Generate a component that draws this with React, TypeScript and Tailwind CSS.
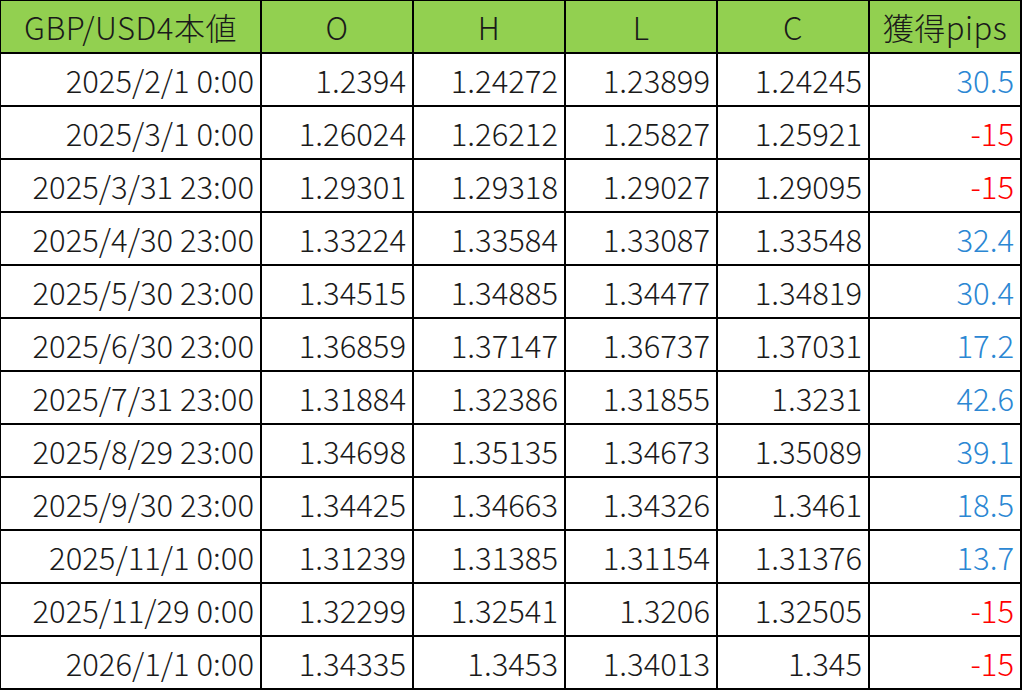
import React from 'react';

type Row = {
  date: string;
  o: string;
  h: string;
  l: string;
  c: string;
  pips: string;
};

const rows: Row[] = [
  { date: '2025/2/1 0:00', o: '1.2394', h: '1.24272', l: '1.23899', c: '1.24245', pips: '30.5' },
  { date: '2025/3/1 0:00', o: '1.26024', h: '1.26212', l: '1.25827', c: '1.25921', pips: '-15' },
  { date: '2025/3/31 23:00', o: '1.29301', h: '1.29318', l: '1.29027', c: '1.29095', pips: '-15' },
  { date: '2025/4/30 23:00', o: '1.33224', h: '1.33584', l: '1.33087', c: '1.33548', pips: '32.4' },
  { date: '2025/5/30 23:00', o: '1.34515', h: '1.34885', l: '1.34477', c: '1.34819', pips: '30.4' },
  { date: '2025/6/30 23:00', o: '1.36859', h: '1.37147', l: '1.36737', c: '1.37031', pips: '17.2' },
  { date: '2025/7/31 23:00', o: '1.31884', h: '1.32386', l: '1.31855', c: '1.3231', pips: '42.6' },
  { date: '2025/8/29 23:00', o: '1.34698', h: '1.35135', l: '1.34673', c: '1.35089', pips: '39.1' },
  { date: '2025/9/30 23:00', o: '1.34425', h: '1.34663', l: '1.34326', c: '1.3461', pips: '18.5' },
  { date: '2025/11/1 0:00', o: '1.31239', h: '1.31385', l: '1.31154', c: '1.31376', pips: '13.7' },
  { date: '2025/11/29 0:00', o: '1.32299', h: '1.32541', l: '1.3206', c: '1.32505', pips: '-15' },
  { date: '2026/1/1 0:00', o: '1.34335', h: '1.3453', l: '1.34013', c: '1.345', pips: '-15' },
];

const headers = ['GBP/USD4本値', 'O', 'H', 'L', 'C', '獲得pips'];

export default function App() {
  return (
    <div
      className="w-[1024px] h-[690px] bg-white text-[#1a1a1a] overflow-hidden"
      style={{ fontFamily: '"Noto Sans CJK JP", "Noto Sans", sans-serif' }}
    >
      <div className="grid grid-cols-[261px_152px_152px_152px_152px_152px] w-[1022px] border-t border-l border-black font-light">
        {headers.map((h) => (
          <div
            key={h}
            className="h-[53px] bg-[#92d050] border-r-2 border-b-2 border-black flex items-center justify-center text-[31px] tracking-[0.5px] leading-none"
          >
            {h}
          </div>
        ))}
        {rows.map((r) => (
          <React.Fragment key={r.date}>
            {[r.date, r.o, r.h, r.l, r.c].map((v, i) => (
              <div
                key={i}
                className="h-[53px] border-r-2 border-b-2 border-black flex items-center justify-end pr-[6px] text-[31px] leading-none"
              >
                {v}
              </div>
            ))}
            <div
              className={
                'h-[53px] border-r-2 border-b-2 border-black flex items-center justify-end pr-[6px] text-[31px] leading-none ' +
                (r.pips.startsWith('-') ? 'text-[#ff0000]' : 'text-[#2b87d3]')
              }
            >
              {r.pips}
            </div>
          </React.Fragment>
        ))}
      </div>
    </div>
  );
}
